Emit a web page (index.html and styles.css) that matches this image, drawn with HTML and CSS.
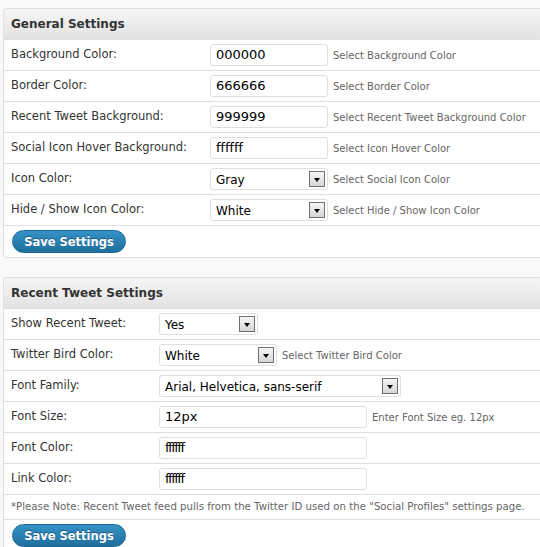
FILE: index.html
```html
<!DOCTYPE html>
<html>
<head>
<meta charset="utf-8">
<link rel="stylesheet" href="styles.css">
</head>
<body>
<div class="panel general">
  <div class="panel-head">General Settings</div>
  <div class="row">
    <div class="label">Background Color:</div>
    <div class="field"><div class="input w118">000000</div><span class="help">Select Background Color</span></div>
  </div>
  <div class="row">
    <div class="label">Border Color:</div>
    <div class="field"><div class="input w118">666666</div><span class="help">Select Border Color</span></div>
  </div>
  <div class="row">
    <div class="label">Recent Tweet Background:</div>
    <div class="field"><div class="input w118">999999</div><span class="help">Select Recent Tweet Background Color</span></div>
  </div>
  <div class="row">
    <div class="label">Social Icon Hover Background:</div>
    <div class="field"><div class="input w118">ffffff</div><span class="help">Select Icon Hover Color</span></div>
  </div>
  <div class="row">
    <div class="label">Icon Color:</div>
    <div class="field"><div class="select w118"><span class="val">Gray</span><span class="arrow"></span></div><span class="help">Select Social Icon Color</span></div>
  </div>
  <div class="row">
    <div class="label">Hide / Show Icon Color:</div>
    <div class="field"><div class="select w118"><span class="val">White</span><span class="arrow"></span></div><span class="help">Select Hide / Show Icon Color</span></div>
  </div>
  <div class="btn-row"><button class="btn">Save Settings</button></div>
</div>

<div class="panel tweet">
  <div class="panel-head">Recent Tweet Settings</div>
  <div class="row">
    <div class="label">Show Recent Tweet:</div>
    <div class="field"><div class="select w99"><span class="val">Yes</span><span class="arrow"></span></div></div>
  </div>
  <div class="row">
    <div class="label">Twitter Bird Color:</div>
    <div class="field"><div class="select w118"><span class="val">White</span><span class="arrow"></span></div><span class="help">Select Twitter Bird Color</span></div>
  </div>
  <div class="row">
    <div class="label">Font Family:</div>
    <div class="field"><div class="select w242"><span class="val">Arial, Helvetica, sans-serif</span><span class="arrow"></span></div></div>
  </div>
  <div class="row">
    <div class="label">Font Size:</div>
    <div class="field"><div class="input w208">12px</div><span class="help">Enter Font Size eg. 12px</span></div>
  </div>
  <div class="row">
    <div class="label">Font Color:</div>
    <div class="field"><div class="input w208 tight">ffffff</div></div>
  </div>
  <div class="row">
    <div class="label">Link Color:</div>
    <div class="field"><div class="input w208 tight">ffffff</div></div>
  </div>
  <div class="note">*Please Note: Recent Tweet feed pulls from the Twitter ID used on the "Social Profiles" settings page.</div>
  <div class="btn-row"><button class="btn">Save Settings</button></div>
</div>
</body>
</html>
```

FILE: styles.css
```css
html, body {
  margin: 0;
  padding: 0;
  background: #f9f9f9;
  overflow: hidden;
}
body {
  font-family: "DejaVu Sans", Verdana, sans-serif;
  color: #333;
  padding-top: 8px;
}
.panel {
  margin-left: 3px;
  border: 1px solid #dfdfdf;
  border-right: none;
  border-radius: 4px 0 0 4px;
  background: #fff;
  margin-bottom: 19px;
}
.panel-head {
  height: 30px;
  line-height: 30px;
  padding-left: 7px;
  font-weight: bold;
  font-size: 12px;
  color: #333;
  background: linear-gradient(#f5f5f5, #e3e3e3);
  border-bottom: 1px solid #dfdfdf;
  border-radius: 4px 0 0 0;
}
.row {
  display: flex;
  align-items: flex-start;
  height: 30px;
  border-bottom: 1px solid #dfdfdf;
}
.label {
  font-size: 11.5px;
  padding-left: 7px;
  padding-top: 7px;
  color: #333;
}
.general .label { width: 199px; }
.tweet .label { width: 148px; }
.field {
  display: flex;
  align-items: center;
  padding-top: 4px;
}
.input, .select {
  box-sizing: border-box;
  height: 22px;
  border: 1px solid #dfdfdf;
  border-radius: 3px;
  background: #fff;
  font-size: 13px;
  line-height: 20px;
  padding-left: 5px;
  color: #000;
}
.input.tight { letter-spacing: -1.5px; }
.select {
  display: flex;
  align-items: center;
  justify-content: space-between;
  padding-right: 2px;
  font-size: 12px;
}
.select .val { padding-top: 1px; }
.w99 { width: 99px; }
.w118 { width: 118px; }
.w208 { width: 208px; }
.w242 { width: 242px; }
.arrow {
  box-sizing: border-box;
  width: 16px;
  height: 16px;
  border: 1px solid #707070;
  background: linear-gradient(#f6f6f6, #d6d6d6);
  display: flex;
  align-items: center;
  justify-content: center;
}
.arrow::after {
  content: "";
  width: 0;
  height: 0;
  margin-top: 2px;
  border-left: 3.5px solid transparent;
  border-right: 3.5px solid transparent;
  border-top: 4px solid #000;
}
.help {
  font-size: 10px;
  color: #666;
  margin-left: 5px;
}
.note {
  height: 24px;
  line-height: 24px;
  font-size: 10.2px;
  color: #666;
  padding-left: 7px;
  border-bottom: 1px solid #dfdfdf;
  white-space: nowrap;
}
.btn-row {
  padding: 4px 0 4px 8px;
}
.btn {
  display: block;
  width: 114px;
  height: 23px;
  border: 1px solid #1b6a95;
  border-radius: 12px;
  background: linear-gradient(#3592c6, #1f6f9d);
  color: #fff;
  font-family: "DejaVu Sans", Verdana, sans-serif;
  font-weight: bold;
  font-size: 11.5px;
  text-shadow: 0 -1px 0 rgba(0,0,0,0.35);
  padding: 0;
}
```
